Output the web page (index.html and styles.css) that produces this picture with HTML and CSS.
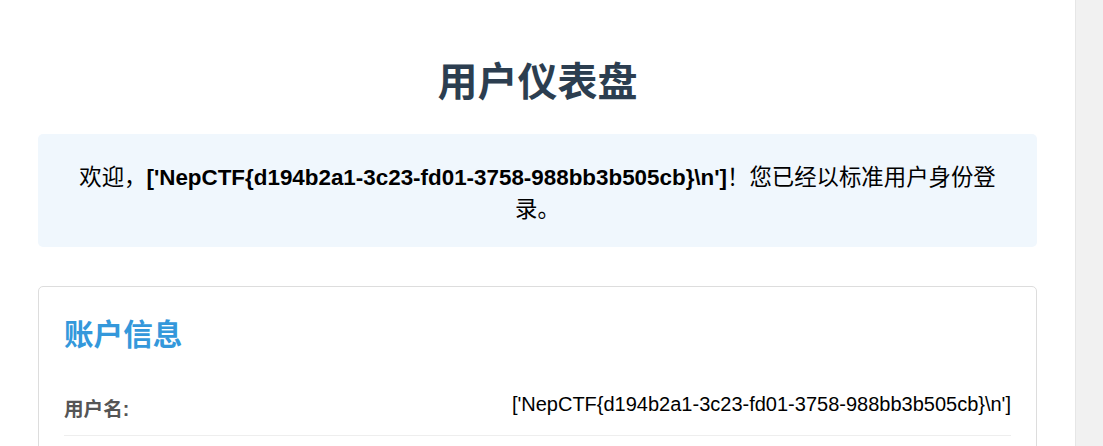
FILE: index.html
```html
<!DOCTYPE html>
<html lang="zh-CN">
<head>
<meta charset="utf-8">
<title>用户仪表盘</title>
<link rel="stylesheet" href="styles.css">
</head>
<body>
<div class="page">
  <h1 class="title">用户仪表盘</h1>
  <div class="welcome">欢迎，<strong>['NepCTF{d194b2a1-3c23-fd01-3758-988bb3b505cb}\n']</strong>！您已经以标准用户身份登录。</div>
  <div class="card">
    <h2 class="card-title">账户信息</h2>
    <div class="row">
      <span class="label">用户名:</span>
      <span class="value">['NepCTF{d194b2a1-3c23-fd01-3758-988bb3b505cb}\n']</span>
    </div>
  </div>
</div>
<div class="track"></div>
</body>
</html>
```

FILE: styles.css
```css
html, body {
  margin: 0;
  padding: 0;
}
body {
  display: flex;
  min-height: 100vh;
  background: #ffffff;
  font-family: "Liberation Sans", "Noto Sans CJK SC", sans-serif;
  color: #000;
  overflow: hidden;
}
.page {
  width: 1075px;
  box-sizing: border-box;
  padding: 0 38px;
  flex: none;
}
.track {
  flex: 1;
  background: #f1f1f1;
  border-left: 1px solid #e6e6e6;
}
.title {
  margin: 50px 0 20px;
  font-size: 40px;
  line-height: 64px;
  font-weight: bold;
  text-align: center;
  color: #2c3e50;
}
.welcome {
  background: #f0f7fd;
  border-radius: 5px;
  padding: 28px 20px 21px;
  font-size: 22.4px;
  line-height: 32px;
  text-align: center;
}
.welcome strong {
  font-weight: bold;
}
.card {
  margin-top: 39px;
  border: 1px solid #dddddd;
  border-radius: 5px;
  padding: 25px;
}
.card-title {
  margin: 0 0 15px;
  font-size: 29.6px;
  line-height: 46px;
  font-weight: bold;
  color: #3498db;
}
.row {
  display: flex;
  justify-content: space-between;
  align-items: flex-start;
  padding: 15px 0 10px;
  border-bottom: 1px solid #eeeeee;
}
.label {
  font-weight: bold;
  color: #555555;
  font-size: 19.6px;
  line-height: 32px;
  padding-top: 5px;
}
.value {
  font-size: 20px;
  line-height: 32px;
}
```
